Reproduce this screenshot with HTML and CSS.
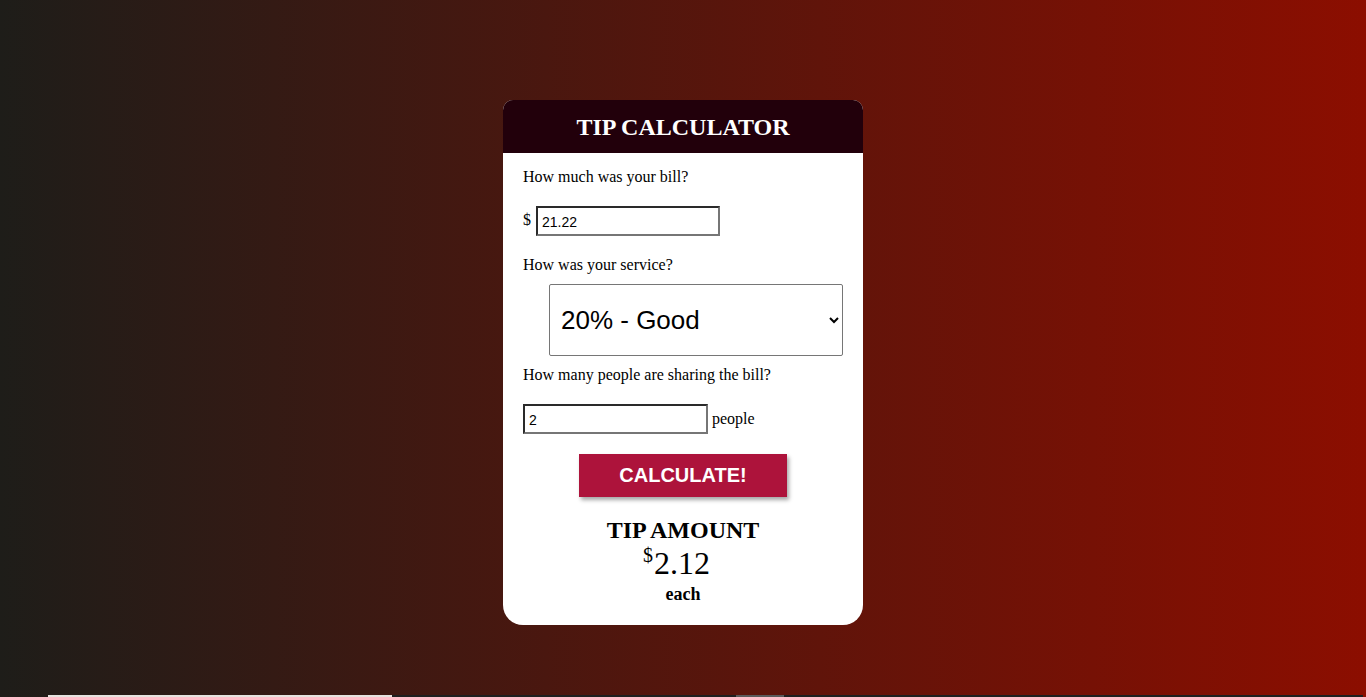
FILE: index.html
```html
<!DOCTYPE html>
<html>
<head>
<meta charset="utf-8">
<title>Tip Calculator</title>
<link rel="stylesheet" href="styles.css">
</head>
<body>
<div class="page">
  <div class="card">
    <div class="card-head">
      <h1 class="title">TIP CALCULATOR</h1>
    </div>
    <div class="card-body">
      <p class="q q-bill">How much was your bill?</p>
      <div class="row">
        <span class="cur">$</span>
        <input class="field field-bill" type="text" value="21.22">
      </div>
      <p class="q q-service">How was your service?</p>
      <select class="service">
        <option>20% - Good</option>
      </select>
      <p class="q q-people">How many people are sharing the bill?</p>
      <div class="row">
        <input class="field field-people" type="text" value="2">
        <span class="unit">people</span>
      </div>
      <button class="calc" type="button">CALCULATE!</button>
      <div class="result">
        <div class="result-title">TIP AMOUNT</div>
        <div class="result-value"><sup class="result-cur">$</sup>2.12</div>
        <div class="result-each">each</div>
      </div>
    </div>
  </div>
  <div class="strip">
    <span class="seg seg-light"></span>
    <span class="seg seg-dark1"></span>
    <span class="seg seg-gray"></span>
    <span class="seg seg-dark2"></span>
  </div>
</div>
</body>
</html>
```

FILE: styles.css
```css
html, body {
  margin: 0;
  padding: 0;
  height: 100%;
  overflow: hidden;
}
body {
  background: linear-gradient(to right, #1e1d19 0%, #8c0e00 100%);
  font-family: "Liberation Serif", "Times New Roman", serif;
  color: #000;
}
.page {
  display: flex;
  flex-direction: column;
  align-items: center;
  padding-top: 100px;
}
.card {
  width: 360px;
  height: 525px;
  background: #fff;
  border-radius: 10px 10px 20px 20px;
  overflow: hidden;
  display: flex;
  flex-direction: column;
}
.card-head {
  background: #22000b;
  height: 53px;
  display: flex;
  align-items: center;
  justify-content: center;
}
.title {
  margin: 0;
  color: #fff;
  font-size: 24px;
  font-weight: bold;
  line-height: 1;
  padding-top: 0;
}
.card-body {
  padding: 15px 20px 0 20px;
  display: flex;
  flex-direction: column;
}
.q {
  margin: 0;
  font-size: 16px;
  line-height: 18px;
}
.row {
  display: flex;
  align-items: center;
  font-size: 16px;
}
.q-bill { margin-bottom: 20px; }
.cur { margin-right: 5px; margin-top: -2px; }
.field {
  box-sizing: border-box;
  height: 30px;
  border-width: 2px;
  border-style: solid;
  border-color: #2a2a2a #767676 #767676 #2a2a2a;
  font-family: "Liberation Sans", Arial, sans-serif;
  font-size: 14px;
  padding: 2px 4px 0 4px;
  background: #fff;
  color: #000;
  outline: none;
}
.field-bill { width: 184px; }
.field-people { width: 185px; }
.unit { margin-left: 4px; }
.q-service { margin-top: 20px; margin-bottom: 10px; }
.service {
  box-sizing: border-box;
  margin-left: 26px;
  width: 294px;
  height: 72px;
  border: 1px solid #767676;
  border-radius: 2px;
  background: #fff;
  color: #000;
  font-family: "Liberation Sans", Arial, sans-serif;
  font-size: 26px;
  padding-left: 7px;
}
.q-people { margin-top: 10px; margin-bottom: 20px; }
.calc {
  align-self: center;
  margin-top: 20px;
  width: 208px;
  height: 43px;
  border: none;
  background: #ad133b;
  color: #fff;
  font-family: "Liberation Sans", Arial, sans-serif;
  font-weight: bold;
  font-size: 20px;
  box-shadow: 2px 3px 4px rgba(0, 0, 0, 0.35);
  padding: 0;
}
.result {
  margin-top: 20px;
  display: flex;
  flex-direction: column;
  align-items: center;
}
.result-title {
  font-size: 24px;
  font-weight: bold;
  line-height: 27px;
}
.result-value {
  font-size: 32px;
  line-height: 33px;
  margin-top: 3px;
  margin-right: 13px;
}
.result-cur {
  font-size: 20px;
  vertical-align: 0;
  position: relative;
  top: -12px;
  margin-right: 1px;
}
.result-each {
  font-size: 18px;
  font-weight: bold;
  line-height: 20px;
  margin-top: 0;
}
.strip {
  align-self: stretch;
  margin-top: 70px;
  height: 2px;
  display: flex;
  padding-left: 48px;
}
.seg { display: block; height: 2px; }
.seg-light { width: 344px; background: #e6e3df; }
.seg-dark1 { width: 344px; background: #1f1f1f; }
.seg-gray { width: 48px; background: #5a5a5a; }
.seg-dark2 { flex: 1; background: #1f1f1f; margin-right: 3px; }
```
